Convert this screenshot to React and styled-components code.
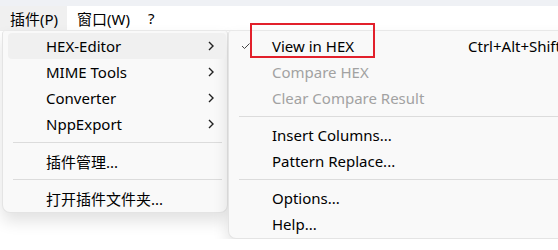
import React from "react";
import styled, { createGlobalStyle } from "styled-components";

const GlobalStyle = createGlobalStyle`
  html, body {
    margin: 0;
    padding: 0;
    background: #ffffff;
    overflow: hidden;
  }
  body {
    font-family: "Noto Sans", "Noto Sans CJK SC", sans-serif;
    font-size: 15px;
    color: #000;
  }
`;

const leftItems = [
  { label: "HEX-Editor", sub: true, active: true },
  { label: "MIME Tools", sub: true },
  { label: "Converter", sub: true },
  { label: "NppExport", sub: true },
  { sep: true },
  { label: "插件管理..." },
  { sep: true },
  { label: "打开插件文件夹..." },
];

const rightItems = [
  { label: "View in HEX", checked: true, shortcut: "Ctrl+Alt+Shift+H", marked: true },
  { label: "Compare HEX", disabled: true },
  { label: "Clear Compare Result", disabled: true },
  { sep: true },
  { label: "Insert Columns..." },
  { label: "Pattern Replace..." },
  { sep: true },
  { label: "Options..." },
  { label: "Help..." },
];

const Chevron = () => (
  <svg width="8" height="12" viewBox="0 0 8 12">
    <path d="M2 2 L6 6 L2 10" fill="none" stroke="#222" strokeWidth="1.4" />
  </svg>
);

const Check = () => (
  <svg width="10" height="8" viewBox="0 0 10 8">
    <path d="M1 4 L3.5 6.5 L8.5 1.5" fill="none" stroke="#444" strokeWidth="1" />
  </svg>
);

const App = () => {
  return (
    <>
      <GlobalStyle />
      <TopStrip />
      <MenuBar>
        <BarItem $open $width={67}>插件(P)</BarItem>
        <BarItem $width={71}>窗口(W)</BarItem>
        <BarItem>?</BarItem>
      </MenuBar>
      <Popups>
        <Menu $width={226}>
          {leftItems.map((it, i) =>
            it.sep ? (
              <Separator key={i} />
            ) : (
              <Item key={i} $active={it.active} $indent={43}>
                <Label>{it.label}</Label>
                {it.sub && (
                  <Arrow>
                    <Chevron />
                  </Arrow>
                )}
              </Item>
            )
          )}
        </Menu>
        <Menu $width={400}>
          {rightItems.map((it, i) =>
            it.sep ? (
              <Separator key={i} />
            ) : (
              <Item key={i} $indent={43} $disabled={it.disabled}>
                {it.checked && (
                  <CheckMark>
                    <Check />
                  </CheckMark>
                )}
                <Label $marked={it.marked}>{it.label}</Label>
                {it.shortcut && <Shortcut>{it.shortcut}</Shortcut>}
              </Item>
            )
          )}
        </Menu>
      </Popups>
    </>
  );
};

const TopStrip = styled.div`
  height: 6px;
  background: #eff1f5;
`;

const MenuBar = styled.div`
  display: flex;
  height: 24px;
  background: #ffffff;
  border-bottom: 1px solid #ececec;
`;

const BarItem = styled.div`
  display: flex;
  align-items: center;
  box-sizing: border-box;
  padding-left: 10px;
  white-space: nowrap;
  ${(p) => p.$width && `width: ${p.$width}px;`}
  background: ${(p) => (p.$open ? "#f0f0f0" : "transparent")};
`;

const Popups = styled.div`
  display: flex;
  align-items: flex-start;
  padding-left: 2px;
`;

const Menu = styled.div`
  flex: none;
  width: ${(p) => p.$width}px;
  background: #f9f9f9;
  border: 1px solid #e4e4e4;
  border-top: none;
  border-radius: 3px 3px 8px 8px;
  box-shadow: 0 8px 16px rgba(0, 0, 0, 0.12);
  padding: 2px 0 1px;
  box-sizing: border-box;
`;

const Item = styled.div`
  position: relative;
  display: flex;
  align-items: center;
  height: 26px;
  margin: 0 1px 0 5px;
  padding-left: ${(p) => p.$indent - 5}px;
  border-radius: 4px;
  background: ${(p) => (p.$active ? "#f0f0f0" : "transparent")};
  color: ${(p) => (p.$disabled ? "#a2a2a2" : "#000")};
`;

const Label = styled.span`
  position: relative;
  white-space: nowrap;
  &::after {
    content: "";
    display: ${(p) => (p.$marked ? "block" : "none")};
    position: absolute;
    left: -22px;
    top: -13px;
    width: 121px;
    height: 31px;
    border: 2px solid #e2202b;
  }
`;

const Arrow = styled.span`
  display: flex;
  margin-left: auto;
  margin-right: 11px;
`;

const CheckMark = styled.span`
  position: absolute;
  left: 7px;
  top: 9px;
  display: flex;
`;

const Shortcut = styled.span`
  position: absolute;
  left: 234px;
  white-space: nowrap;
`;

const Separator = styled.div`
  height: 1px;
  margin: 5px 5px 5px 10px;
  background: #dcdcdc;
`;

export default App;
